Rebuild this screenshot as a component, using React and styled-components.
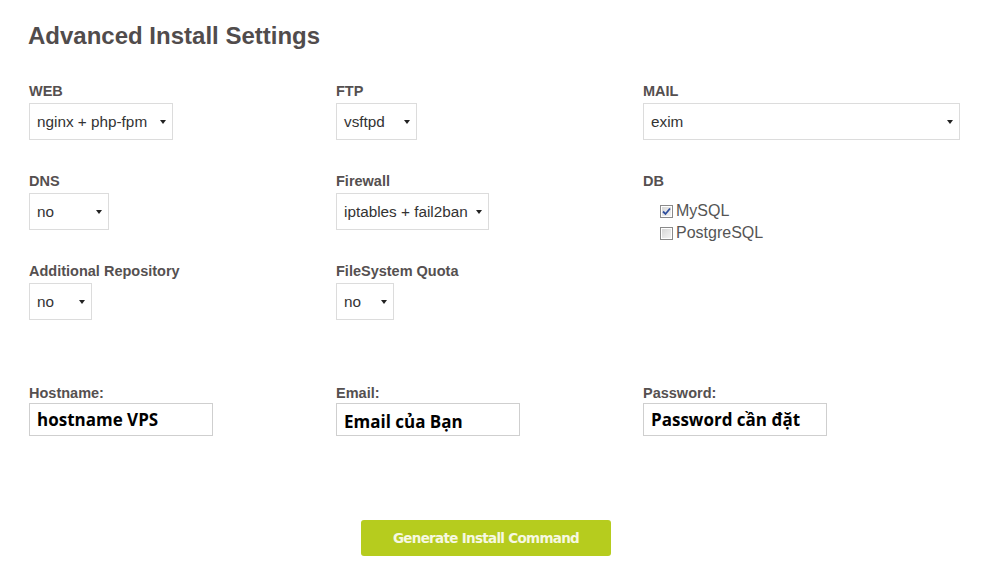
import React from 'react';
import styled, { createGlobalStyle } from 'styled-components';

const GlobalStyle = createGlobalStyle`
  *, *:before, *:after {
    box-sizing: border-box;
  }
  body {
    margin: 0;
    background: #fff;
    font-family: 'Liberation Sans', Arial, sans-serif;
  }
`;

const Page = styled.div`
  padding: 22px 0 0 29px;
  width: 988px;
  min-height: 581px;
`;

const Title = styled.h1`
  margin: 0 0 0 -1px;
  font-size: 24px;
  line-height: 28px;
  font-weight: bold;
  color: #514c4c;
`;

const SettingsGrid = styled.div`
  display: grid;
  grid-template-columns: repeat(3, 307px);
  grid-template-rows: repeat(3, 57px);
  row-gap: 33px;
  margin-top: 33px;
`;

const Field = styled.div`
  display: flex;
  flex-direction: column;
  align-items: flex-start;
`;

const Label = styled.label`
  display: block;
  font-size: 14.5px;
  line-height: 16px;
  font-weight: bold;
  color: #555050;
  margin-bottom: ${(p) => p.$gap || 4}px;
`;

const SelectBox = styled.div`
  width: ${(p) => p.$width}px;
  height: 37px;
  border: 1px solid #dcdcdc;
  background: #fff;
  display: flex;
  align-items: center;
  justify-content: space-between;
  padding: 0 6px 0 7px;
  font-size: 15.3px;
  color: #333;
`;

const Caret = styled.span`
  width: 0;
  height: 0;
  border-left: 3.5px solid transparent;
  border-right: 3.5px solid transparent;
  border-top: 4px solid #222;
  margin-top: 1px;
`;

const CheckList = styled.div`
  margin-top: 7px;
  padding-left: 17px;
  display: flex;
  flex-direction: column;
`;

const CheckRow = styled.div`
  display: flex;
  align-items: center;
  gap: 3px;
  height: 22px;
  font-size: 16px;
  color: #555;
`;

const Box = styled.span`
  width: 13px;
  height: 13px;
  border: 1px solid #8a8a8a;
  background: linear-gradient(135deg, #d4d4d4, #f7f7f7);
  box-shadow: inset 0 0 0 1px #fff;
  display: flex;
  align-items: center;
  justify-content: center;
`;

const CredGrid = styled.div`
  display: grid;
  grid-template-columns: repeat(3, 307px);
  margin-top: 65px;
`;

const TextInput = styled.div`
  width: 184px;
  height: 33px;
  border: 1px solid #cfcfcf;
  background: #fff;
  padding: ${(p) => (p.$shift ? '3px' : '0')} 0 0 7px;
  display: flex;
  align-items: center;
  font-family: 'Open Sans', 'Noto Sans', sans-serif;
  font-weight: 700;
  font-size: 17px;
  color: #000;
  white-space: nowrap;
`;

const ButtonRow = styled.div`
  margin-top: 84px;
  padding-left: 332px;
`;

const Button = styled.button`
  width: 250px;
  height: 36px;
  border: none;
  border-radius: 3px;
  background: #b6cc1e;
  color: #f6f8e2;
  font-family: 'DejaVu Sans', Verdana, sans-serif;
  font-weight: bold;
  font-size: 13.5px;
  letter-spacing: -0.7px;
  cursor: pointer;
`;

const Select = ({ label, value, width }) => (
  <Field>
    <Label>{label}</Label>
    <SelectBox $width={width}>
      <span>{value}</span>
      <Caret />
    </SelectBox>
  </Field>
);

const Check = ({ checked, children }) => (
  <CheckRow>
    <Box>
      {checked && (
        <svg width="9" height="9" viewBox="0 0 9 9">
          <path d="M1 4.5 L3.5 7 L8 1.5" fill="none" stroke="#2f4f9e" strokeWidth="1.8" />
        </svg>
      )}
    </Box>
    {children}
  </CheckRow>
);

const Cred = ({ label, value, shift }) => (
  <Field>
    <Label $gap={2}>{label}</Label>
    <TextInput $shift={shift}>{value}</TextInput>
  </Field>
);

export default function App() {
  return (
    <Page>
      <GlobalStyle />
      <Title>Advanced Install Settings</Title>
      <SettingsGrid>
        <Select label="WEB" value="nginx + php-fpm" width={144} />
        <Select label="FTP" value="vsftpd" width={81} />
        <Select label="MAIL" value="exim" width={317} />
        <Select label="DNS" value="no" width={80} />
        <Select label="Firewall" value="iptables + fail2ban" width={153} />
        <Field>
          <Label>DB</Label>
          <CheckList>
            <Check checked>MySQL</Check>
            <Check>PostgreSQL</Check>
          </CheckList>
        </Field>
        <Select label="Additional Repository" value="no" width={63} />
        <Select label="FileSystem Quota" value="no" width={58} />
      </SettingsGrid>
      <CredGrid>
        <Cred label="Hostname:" value="hostname VPS" />
        <Cred label="Email:" value="Email của Bạn" shift />
        <Cred label="Password:" value="Password cần đặt" />
      </CredGrid>
      <ButtonRow>
        <Button>Generate Install Command</Button>
      </ButtonRow>
    </Page>
  );
}
